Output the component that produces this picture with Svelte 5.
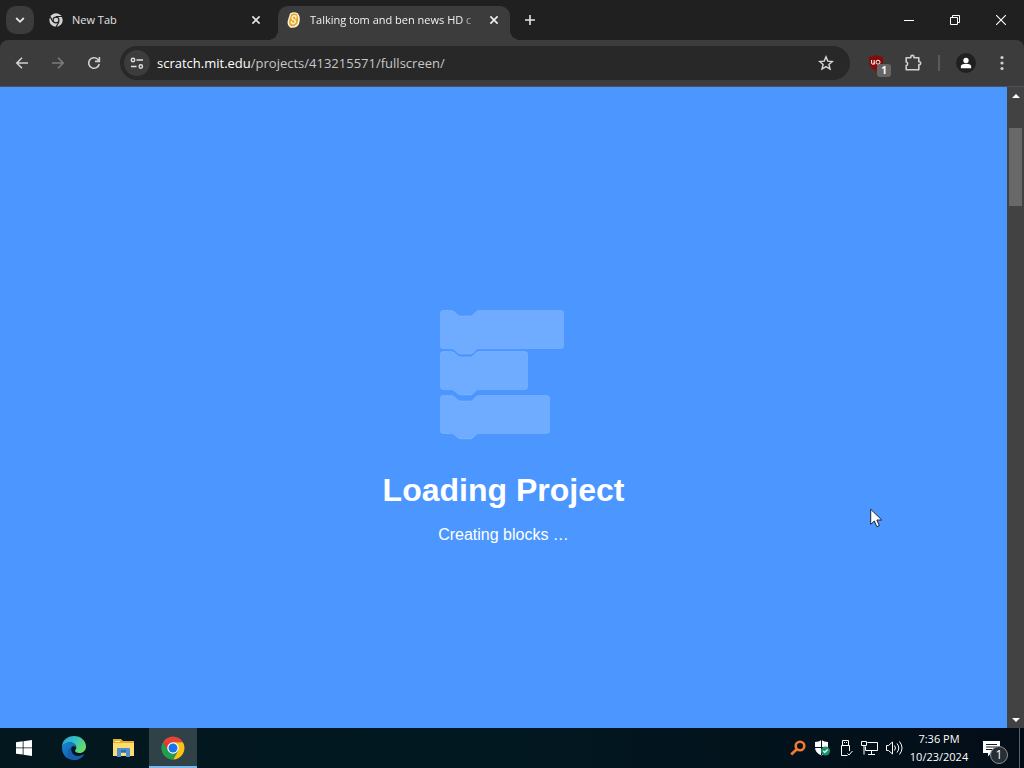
<script>
  let address = $state('scratch.mit.edu/projects/413215571/fullscreen/');
  const host = $derived(address.split('/')[0]);
  const path = $derived(address.slice(host.length));
</script>

{#snippet cross(size)}
  <svg width={size} height={size} viewBox="0 0 10 10" fill="none" stroke="currentColor" stroke-width="1.6"><path d="M1.4 1.4l7.2 7.2M8.6 1.4L1.4 8.6" /></svg>
{/snippet}

{#snippet chromeLogo(mono)}
  <svg width="100%" height="100%" viewBox="0 0 48 48">
    {#if mono}
      <circle cx="24" cy="24" r="23" fill="#d2d2d2" />
      <circle cx="24" cy="24" r="12" fill="#202020" />
      <path d="M24 12h21M13.6 30L3.5 12.5M34.4 30L24 48" stroke="#202020" stroke-width="4" />
      <circle cx="24" cy="24" r="8" fill="#d2d2d2" />
    {:else}
      <path d="M24 24L4.1 12.5A23 23 0 0 1 43.9 12.5H24z" fill="#ea4335" />
      <path d="M24 12.5h19.9A23 23 0 0 1 24 47l10-17.3z" fill="#fbc116" />
      <path d="M4.1 12.5A23 23 0 0 0 24 47l10-17.2L14 29.7z" fill="#239b50" />
      <path d="M4.1 12.5L14 29.8 24 24V12.5z" fill="#e33b2e" />
      <path d="M4.100 12.500A23 23 0 0 0 24 47l8-14L12 26z" fill="#239b50" />
      <circle cx="24" cy="24" r="11.5" fill="#fff" />
      <circle cx="24" cy="24" r="9" fill="#1a73e8" />
    {/if}
  </svg>
{/snippet}

<div class="screen">
  <header class="tabs">
    <button class="search-tabs" aria-label="Search tabs">
      <svg width="10" height="10" viewBox="0 0 10 10" fill="none" stroke="currentColor" stroke-width="1.8"><path d="M1.2 3l3.8 3.8L8.8 3" /></svg>
    </button>
    <div class="tab">
      <span class="favicon">{@render chromeLogo(true)}</span>
      <span class="tab-title">New Tab</span>
      <button class="close" aria-label="Close New Tab">{@render cross(10)}</button>
    </div>
    <div class="tab active">
      <span class="favicon">
        <svg width="16" height="16" viewBox="0 0 16 16">
          <path d="M4 1.5Q8-1 12 1.5Q15 5 13 12Q10 17 4 15.5Q.5 13 2 8z" fill="#fff4dc" />
          <path d="M5 2.5Q9 .5 11.5 3Q13 7 11.5 11.5Q9 15 4.5 14Q2.5 12 3.3 8z" fill="#e9a828" />
          <path d="M9.8 6.5V4.2Q7.2 3 6.3 5.2T8.3 7.8Q10.2 9.5 8.5 11T5.5 10.8V9" fill="none" stroke="#fff4cf" stroke-width="1.5" />
        </svg>
      </span>
      <span class="tab-title">Talking tom and ben news HD c</span>
      <button class="close" aria-label="Close tab">{@render cross(10)}</button>
    </div>
    <button class="new-tab" aria-label="New tab">
      <svg width="12" height="12" viewBox="0 0 12 12" stroke="currentColor" stroke-width="1.6"><path d="M6 1v10M1 6h10" /></svg>
    </button>
    <div class="window-buttons">
      <button aria-label="Minimize"><svg width="10" height="10" viewBox="0 0 10 10"><path d="M0 5h10v1H0z" fill="#fff" /></svg></button>
      <button aria-label="Restore"><svg width="10" height="10" viewBox="0 0 10 10" fill="none" stroke="#fff"><path d="M.5 2.5h7v7h-7zM2.5 2.5v-2h7v7h-2" /></svg></button>
      <button aria-label="Close"><svg width="10" height="10" viewBox="0 0 10 10" stroke="#fff" stroke-width="1.1"><path d="M0 0l10 10M10 0L0 10" /></svg></button>
    </div>
  </header>

  <nav class="toolbar">
    <button aria-label="Back"><svg width="16" height="16" viewBox="0 0 16 16" fill="none" stroke="#d0d0d0" stroke-width="1.6"><path d="M14 8H3M8 2.8L2.8 8 8 13.2" /></svg></button>
    <button aria-label="Forward"><svg width="16" height="16" viewBox="0 0 16 16" fill="none" stroke="#7c7c7c" stroke-width="1.6"><path d="M2 8h11M8 2.8L13.2 8 8 13.2" /></svg></button>
    <button aria-label="Reload"><svg width="16" height="16" viewBox="0 0 16 16" fill="none" stroke="#d0d0d0" stroke-width="1.6"><path d="M13.2 9A5.3 5.3 0 1 1 11.8 4.3L13 5.6M13.4 2v4.4H9" /></svg></button>
    <div class="address">
      <button class="site-info" aria-label="View site information">
        <svg width="14" height="14" viewBox="0 0 14 14" fill="none" stroke="#e0e0e0" stroke-width="1.4"><circle cx="3" cy="4" r="1.7" /><path d="M6.5 4H13M1 10.5h5.5" /><circle cx="10.8" cy="10.5" r="1.7" /></svg>
      </button>
      <label class="url">
        <span class="url-text" aria-hidden="true"><b>{host}</b>{path}</span>
        <input type="text" aria-label="Address and search bar" bind:value={address} spellcheck="false" />
      </label>
      <button class="star" aria-label="Bookmark this tab"><svg width="16" height="16" viewBox="0 0 16 16" fill="none" stroke="#d8d8d8" stroke-width="1.4"><path d="M8 1.8l1.8 4.3 4.6.4-3.5 3 1.1 4.6L8 11.6l-4 2.5 1.1-4.6-3.5-3 4.6-.4z" /></svg></button>
    </div>
    <button class="ublock" aria-label="uBlock Origin, 1 blocked">
      <svg width="16" height="16" viewBox="0 0 16 16"><path d="M8 0Q11 1.8 15 2v5q0 6-7 9Q1 13 1 7V2Q5 1.8 8 0z" fill="#850b0b" /><path d="M3.6 5v3.2q0 1 1.3 1t1.3-1V5M6.2 9.5v-2" stroke="#fff" fill="none" /><circle cx="10" cy="7.2" r="2" stroke="#fff" fill="none" /></svg>
      <span class="count">1</span>
    </button>
    <button aria-label="Extensions"><svg width="18" height="18" viewBox="0 0 18 18" fill="none" stroke="#d0d0d0" stroke-width="1.6" stroke-linejoin="round"><path d="M2.2 3.800H6.800V3a1.600 1.600 0 0 1 3.200 0v.8h4.800v4h.4a1.500 1.500 0 0 1 0 3h-.4v5H2.200v-4.200a1.900 1.900 0 0 0 0-3.700z" /></svg></button>
    <span class="divider"></span>
    <button class="profile" aria-label="Profile"><svg width="14" height="14" viewBox="0 0 14 14" fill="#fff"><circle cx="7" cy="4" r="3.1" /><path d="M1 13v-2q0-3 6-3t6 3v2z" /></svg></button>
    <button class="more" aria-label="Menu"><svg width="4" height="16" viewBox="0 0 4 16" fill="#d0d0d0"><circle cx="2" cy="2.5" r="1.6" /><circle cx="2" cy="8" r="1.6" /><circle cx="2" cy="13.5" r="1.6" /></svg></button>
  </nav>

  <div class="viewport">
    <main>
      <svg class="blocks" width="126" height="132" viewBox="0 0 126 132" fill="#fff" fill-opacity=".2" stroke="#fff" stroke-opacity=".12">
        <path d="M4 1.5H12C16 1.5 18 7 22 7H31C35 7 36 1.5 40 1.5H122Q124.5 1.5 124.5 4V37Q124.5 39.5 122 39.5H40C36 39.5 35 45 31 45H22C18 45 16 39.5 12 39.5H4Q1.5 39.5 1.5 37V4Q1.5 1.5 4 1.5z" />
        <path d="M4 42.5H12C16 42.5 18 48 22 48H31C35 48 36 42.5 40 42.5H86Q88.5 42.5 88.5 45V78Q88.5 80.5 86 80.5H40C36 80.5 35 86 31 86H22C18 86 16 80.5 12 80.5H4Q1.5 80.5 1.5 78V45Q1.5 42.5 4 42.5z" />
        <path d="M4 86.5H12C16 86.5 18 92 22 92H31C35 92 36 86.5 40 86.5H108Q110.5 86.5 110.5 89V122Q110.5 124.5 108 124.5H40C36 124.5 35 130 31 130H22C18 130 16 124.5 12 124.5H4Q1.5 124.5 1.5 122V89Q1.5 86.5 4 86.5z" />
      </svg>
      <h1>Loading Project</h1>
      <p>Creating blocks …</p>
    </main>
    <div class="scrollbar">
      <button aria-label="Scroll up"><svg width="8" height="4" viewBox="0 0 8 4" fill="#fff"><path d="M0 4l4-4 4 4z" /></svg></button>
      <div class="track"><div class="thumb"></div></div>
      <button aria-label="Scroll down"><svg width="8" height="4" viewBox="0 0 8 4" fill="#fff"><path d="M0 0l4 4 4-4z" /></svg></button>
    </div>
    <svg class="pointer" width="13" height="20" viewBox="0 0 13 20" fill="#fff" stroke="#15243b"><path d="M.7 1.2v15.2l3.6-3.4 2.5 5.7 2.6-1.1-2.5-5.6h4.9z" /></svg>
  </div>

  <footer class="taskbar">
    <button class="app" aria-label="Start"><svg width="16" height="16" viewBox="0 0 16 16" fill="#fff"><path d="M0 2.2l6.7-.9v6.200H0zM7.500 1.200L16 0v7.500H7.500zM0 8.300h6.700v6.300L0 13.700zM7.500 8.300H16V16l-8.500-1.200z" /></svg></button>
    <button class="app" aria-label="Microsoft Edge">
      <svg width="26" height="26" viewBox="0 0 26 26">
        <defs>
          <linearGradient id="edge-top" x1="0" y1="0" x2="1" y2=".5"><stop stop-color="#259fdb" /><stop offset=".5" stop-color="#32bfc8" /><stop offset="1" stop-color="#67dc68" /></linearGradient>
          <linearGradient id="edge-low" x1="0" y1="0" x2="1" y2="1"><stop stop-color="#1686d5" /><stop offset="1" stop-color="#124e9c" /></linearGradient>
        </defs>
        <path d="M1 12C1 5 6.5 1 13 1c7 0 12 5 12 10.5 0 4-3 6.5-6.5 6.5-3 0-4.5-1.2-4.5-2.2 0-.8 1.3-1.3 1.3-3.3C15.3 9 12 7.5 9 7.5 5 7.5 2 9 1 12z" fill="url(#edge-top)" />
        <path d="M1 13c0-3.5 4-5.5 8-5.5 3.5 0 6.3 2 6.3 5-1-1.3-2.3-1.6-3.5-1.2C8 12.5 8.5 22 18 21c2-.2 4-1 5.5-2C21 23 17.5 25 13 25 6 25 1 20 1 13z" fill="url(#edge-low)" />
        <path d="M10.3 12.2C5 14.5 5.8 23 12 25c5 .5 9-2 11.5-6-7 4.5-14 1.5-13.200-6.800z" fill="#175cad" />
      </svg>
    </button>
    <button class="app" aria-label="File Explorer">
      <svg width="22" height="20" viewBox="0 0 22 20"><path d="M0 1h8l2 2h11v15H0z" fill="#e8ad2e" /><path d="M0 5h21v13H0z" fill="#ffdc70" /><path d="M2 3h5v1H2z" fill="#fff2bd" /><path d="M4 11q0-1 1-1h11q1 0 1 1v8h-4v-4H8v4H4z" fill="#4c91ce" /><path d="M8 12h5v2H8z" fill="#2e6eac" /></svg>
    </button>
    <button class="app running" aria-label="Google Chrome"><span class="chrome-icon">{@render chromeLogo(false)}</span></button>
    <div class="tray">
      <button aria-label="Search indicator"><svg width="16" height="16" viewBox="0 0 16 16" fill="none" stroke="#f27b30"><circle cx="10" cy="6" r="4.3" stroke-width="2.6" /><path d="M6.5 9.5L1.2 14.5" stroke-width="2.8" /></svg></button>
      <button aria-label="Windows Security">
        <svg width="16" height="16" viewBox="0 0 16 16"><path d="M7.5 0Q10 2 14 2v5q0 6-6.5 8.500Q1 13 1 7V2Q5 2 7.500 0z" fill="#fff" /><path d="M7.500 0v15M1 7.500h13" stroke="#07141d" /><circle cx="11.500" cy="11" r="4.500" fill="#16966a" /><path d="M9.300 11l1.500 1.500 2.800-3" fill="none" stroke="#fff" stroke-width="1.200" /></svg>
      </button>
      <button aria-label="Safely remove hardware"><svg width="16" height="18" viewBox="0 0 16 18" fill="none" stroke="#fff"><path d="M4.500 6.500v-5h6v5M3.500 6.500h8v5.500M3.500 6.500v10h6M6.500 3v1M8.500 3v1M9.500 14.500l1.500 1.500 3.500-4" /></svg></button>
      <button aria-label="Network"><svg width="18" height="16" viewBox="0 0 18 16" fill="none" stroke="#fff"><path d="M6.500 2.500h10v8h-12v-4M.5 1.500h5v4h-5zM3 5.500v9M10.500 10.500v4M7 14.500h7" /></svg></button>
      <button aria-label="Volume"><svg width="18" height="16" viewBox="0 0 18 16" fill="none" stroke="#fff"><path d="M1.500 5.500h2l4-3.500v12l-4-3.500h-2zM9.500 5.500q2 2.500 0 5M12 3.500q3.500 4.500 0 9M14.500 1.500q5 6.500 0 13" /></svg></button>
    </div>
    <button class="clock"><time datetime="2024-10-23T19:36">7:36 PM<br />10/23/2024</time></button>
    <button class="notifications" aria-label="Notifications">
      <svg width="17" height="17" viewBox="0 0 17 17"><path d="M0 1h17v12H8l-3 3.500V13H0z" fill="#fff" /><path d="M3 4.500h11M3 7h11M3 9.500h7" stroke="#111a20" /></svg>
      <span class="badge">1</span>
    </button>
    <button class="desktop" aria-label="Show desktop"></button>
  </footer>
</div>

<style>
  :global(body) { margin: 0; }
  .screen { display: flex; flex-direction: column; height: 100vh; overflow: hidden; background: #202020; color: #e3e3e3; font-family: "Open Sans", "Noto Sans", sans-serif; font-size: 11px; }
  button { display: flex; align-items: center; justify-content: center; flex: none; padding: 0; border: 0; background: none; color: inherit; font: inherit; }
  svg { flex: none; display: block; }

  .tabs { display: flex; height: 40px; flex: none; align-items: center; padding-left: 6px; }
  .search-tabs { width: 28px; height: 28px; border-radius: 10px; background: #3c3c3c; }
  .tab { display: flex; align-items: center; box-sizing: border-box; flex: 0 1 232px; min-width: 0; height: 34px; padding: 0 8px; gap: 8px; margin-left: 6px; }
  .tab.active { position: relative; align-self: flex-end; padding-bottom: 6px; border-radius: 10px 10px 0 0; background: #3c3c3c; color: #f1f1f1; }
  .tab.active::before, .tab.active::after { content: ""; position: absolute; bottom: 0; width: 10px; height: 10px; }
  .tab.active::before { right: 100%; background: radial-gradient(circle at 0 0, transparent 10px, #3c3c3c 10px); }
  .tab.active::after { left: 100%; background: radial-gradient(circle at 100% 0, transparent 10px, #3c3c3c 10px); }
  .favicon { width: 16px; height: 16px; flex: none; }
  .tab:not(.active) .favicon { width: 14px; height: 14px; margin: 0 1px; }
  .tab-title { flex: 1; overflow: hidden; white-space: nowrap; line-height: 18px; }
  .active .tab-title { mask-image: linear-gradient(to right, #000 90%, transparent); }
  .close { width: 16px; height: 16px; }
  .new-tab { width: 28px; height: 28px; margin-left: 6px; }
  .window-buttons { display: flex; align-self: stretch; margin-left: auto; }
  .window-buttons button { width: 46px; }

  .toolbar { display: flex; align-items: center; flex: none; height: 46px; padding-left: 8px; border-bottom: 1px solid #4a5260; border-radius: 8px 8px 0 0; background: #3c3c3c; }
  .toolbar > button { width: 28px; height: 28px; margin-right: 8px; }
  .address { display: flex; align-items: center; flex: 1; min-width: 0; height: 34px; margin: 0 12px 0 4px; padding: 0 4px; border-radius: 17px; background: #282828; }
  .site-info { width: 26px; height: 26px; border-radius: 13px; background: #3c3c3c; }
  .url { display: grid; flex: 1; min-width: 0; margin-left: 7px; font-size: 13px; line-height: 20px; }
  .url-text, .url input { grid-area: 1 / 1; min-width: 0; white-space: nowrap; }
  .url-text { overflow: hidden; color: #c7c7c7; }
  .url-text b { font-weight: 400; color: #fff; }
  .url input { padding: 0; border: 0; outline: 0; background: none; color: transparent; caret-color: #fff; font: inherit; }
  .star { width: 28px; height: 28px; margin-right: 6px; }
  .toolbar > .ublock { position: relative; margin-right: 9px; }
  .count { position: absolute; right: -1px; bottom: 0; width: 14px; height: 13px; border-radius: 3px; background: #666; color: #fff; font-size: 10px; font-weight: 700; line-height: 13px; }
  .divider { width: 2px; height: 16px; margin: 0 16px 0 3px; background: #5a5a5a; }
  .toolbar > .profile { width: 20px; height: 20px; margin-right: 12px; border-radius: 10px; background: #202020; }
  .toolbar > .profile svg { width: 12px; }
  .toolbar > .more { width: 28px; margin-right: 8px; }

  .viewport { position: relative; display: flex; flex: 1; min-height: 0; }
  main { display: flex; flex: 1; flex-direction: column; align-items: center; padding-top: 222px; background: #4c97ff; color: #fff; font-family: "Liberation Sans", Arial, sans-serif; }
  .blocks { margin-right: 4px; }
  h1 { margin: 29px 0 0; font-size: 32px; line-height: 40px; }
  p { margin: 15px 0 0; font-size: 16px; line-height: 20px; }
  .scrollbar { display: flex; flex-direction: column; width: 17px; flex: none; background: #424242; }
  .scrollbar button { height: 17px; }
  .track { flex: 1; padding: 24px 2px 0; }
  .thumb { height: 78px; background: #686868; }
  .pointer { position: absolute; left: 870px; top: 421px; }

  .taskbar { display: flex; flex: none; height: 40px; gap: 1px; background: linear-gradient(to right, #02171e, #021820 50%, #030d18); color: #fff; }
  .app { width: 48px; }
  .app + .app { width: 49px; }
  .app.running { width: 48px; box-sizing: border-box; border-bottom: 2px solid #76b9ed; padding-top: 2px; background: #304148; }
  .chrome-icon { width: 24px; height: 24px; }
  .tray { display: flex; margin-left: auto; }
  .tray button { width: 24px; }
  .clock { width: 64px; line-height: 18px; text-align: center; }
  .notifications { position: relative; width: 38px; margin-right: 8px; }
  .badge { position: absolute; left: 18px; bottom: 4px; box-sizing: border-box; width: 18px; height: 18px; border: 1px solid #899096; border-radius: 9px; background: #272f34; font-size: 12px; line-height: 16px; }
  .desktop { width: 5px; border-left: 1px solid #59616a; }
</style>
